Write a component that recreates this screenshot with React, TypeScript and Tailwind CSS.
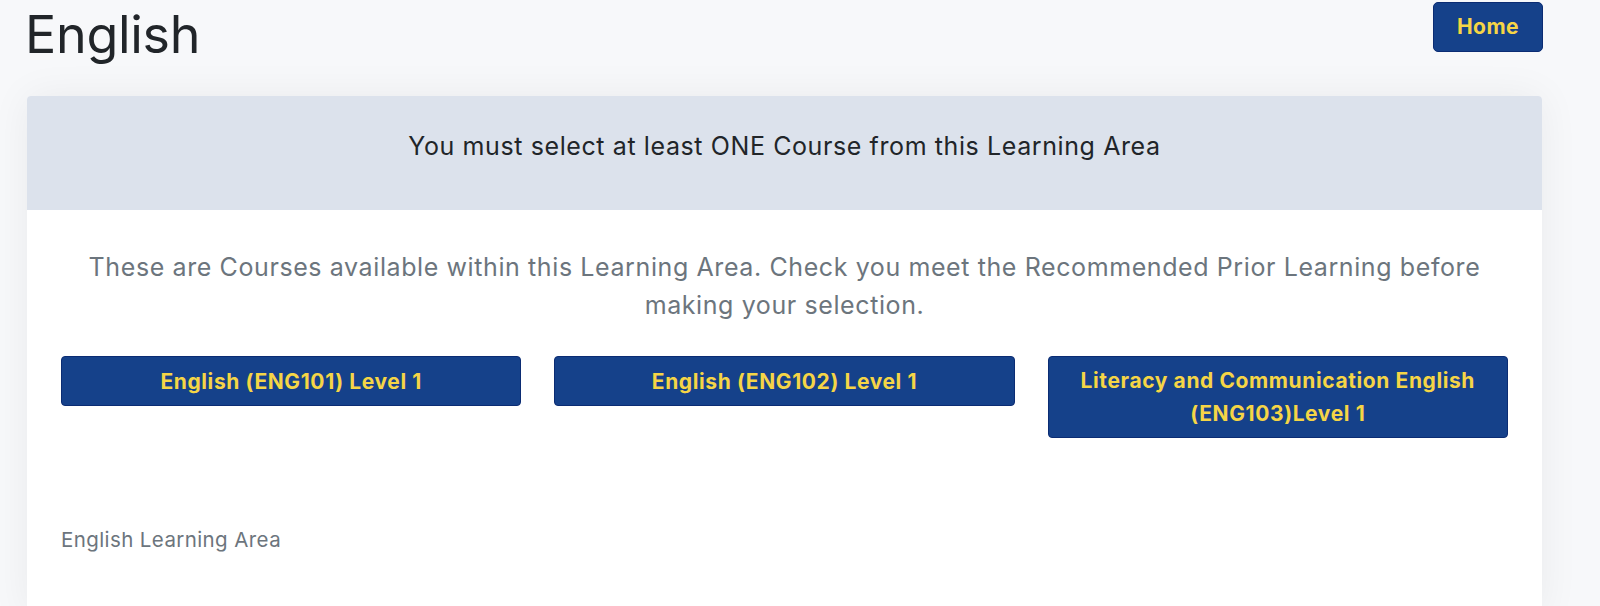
import React from 'react';

const courses = [
  'English (ENG101) Level 1',
  'English (ENG102) Level 1',
  'Literacy and Communication English (ENG103)Level 1',
];

export default function App() {
  return (
    <div className="min-h-screen bg-[#f7f8fa] font-['Inter',sans-serif] text-[#212529]">
      {/* top bar */}
      <div className="flex items-start justify-between pl-[25px] pr-[57px] pt-[2px]">
        <h1 className="text-[52px] leading-[66px] font-normal tracking-[-0.3px]">English</h1>
        <button className="w-[110px] h-[50px] rounded-[5px] bg-[#15418a] border border-[#0b2c73] text-[#f5d546] text-[21px] tracking-[0.5px] font-bold">
          Home
        </button>
      </div>

      {/* card */}
      <div className="ml-[27px] mr-[58px] mt-[28px] bg-white rounded-t-[4px] shadow-[0_0_40px_rgba(0,0,0,0.06)] min-h-[520px]">
        <div className="h-[114px] bg-[#dce2ec] rounded-t-[4px] flex items-center justify-center pb-[12px]">
          <p className="text-[25px] tracking-[0.6px] text-[#212529]">
            You must select at least ONE Course from this Learning Area
          </p>
        </div>

        <div className="px-[34px] pt-[38px]">
          <p className="text-center text-[25px] tracking-[0.6px] leading-[38px] text-[#6c757d] px-[20px]">
            These are Courses available within this Learning Area. Check you meet the Recommended Prior Learning before
            making your selection.
          </p>

          <div className="mt-[32px] grid grid-cols-3 gap-x-[33px] items-start">
            {courses.map((c) => (
              <button
                key={c}
                className="min-h-[50px] rounded-[4px] bg-[#15418a] border border-[#0b2c73] text-[#f5d546] text-[21px] tracking-[0.6px] leading-[33px] font-bold px-[30px] py-[7px]"
              >
                {c}
              </button>
            ))}
          </div>

          <p className="mt-[90px] text-[20.5px] tracking-[0.4px] leading-[24px] text-[#6c757d]">English Learning Area</p>
        </div>
      </div>
    </div>
  );
}
